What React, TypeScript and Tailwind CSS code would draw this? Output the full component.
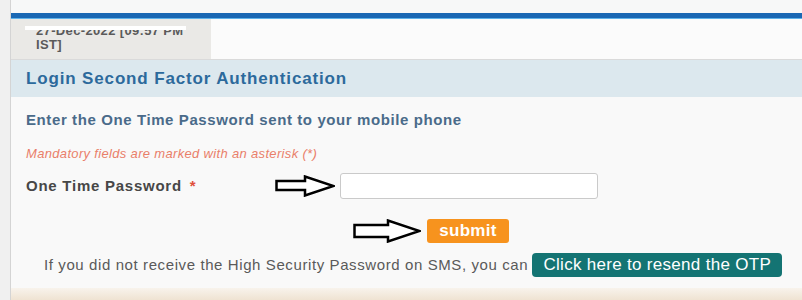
import React from "react";

function OutlineArrow({ w, h, shaftTop, shaftBottom, headX }: { w: number; h: number; shaftTop: number; shaftBottom: number; headX: number }) {
  const pts = `1.5,${shaftTop} ${headX},${shaftTop} ${headX},1.5 ${w - 1.5},${h / 2} ${headX},${h - 1.5} ${headX},${shaftBottom} 1.5,${shaftBottom}`;
  return (
    <svg width={w} height={h} viewBox={`0 0 ${w} ${h}`} className="block shrink-0">
      <polygon points={pts} fill="#ffffff" stroke="#000000" strokeWidth="2.5" strokeLinejoin="miter" />
    </svg>
  );
}

export default function App() {
  return (
    <div className="w-[802px] h-[300px] overflow-hidden flex bg-[#f2f2f2] font-['Liberation_Sans',Arial,sans-serif]">
      <div className="w-[10px] shrink-0 bg-[#f0f0f0]" />
      <div className="flex-1 flex flex-col border-l border-[#d4d4d4] bg-[#fafafa]">
        <div className="h-[13px] bg-[#f7f8f8]" />
        <div className="h-[5px] bg-[#1a68b4]" />
        <div className="h-[1px] bg-[#5fb3ea]" />
        <div className="h-[40px] flex bg-[#fbfbfb]">
          <div className="w-[200px] bg-[#eae9e6] relative pl-[25px] pt-[5px] text-[13px] leading-[14px] font-bold text-[#5a5a5a] tracking-[0.35px]">
            <div>27-Dec-2022 [09:57 PM</div>
            <div>IST]</div>
            <div className="absolute left-[14px] top-[7px] w-[161px] h-[4px] bg-white" />
          </div>
          <div className="flex-1" />
        </div>
        <div className="h-[38px] border-t border-[#dadada] bg-[#dce8ee] flex items-center pl-[15px]">
          <span className="text-[17px] font-bold text-[#2c6a9c] tracking-[0.85px]">Login Second Factor Authentication</span>
        </div>
        <div className="flex-1 flex flex-col bg-[#f9f9f9] pl-[15px]">
          <div className="mt-[13px] h-[20px] leading-[20px] text-[15px] font-bold text-[#4a6b8a] tracking-[0.6px]">
            Enter the One Time Password sent to your mobile phone
          </div>
          <div className="mt-[16px] h-[16px] leading-[16px] text-[13px] italic text-[#e97f6a] tracking-[0.33px]">
            Mandatory fields are marked with an asterisk (*)
          </div>
          <div className="mt-[11px] h-[26px] flex items-center">
            <div className="w-[249px] text-[15px] font-bold text-[#474747] tracking-[0.75px]">
              One Time Password <span className="text-[#e0503c] ml-[3px]">*</span>
            </div>
            <OutlineArrow w={60} h={22} shaftTop={6} shaftBottom={15} headX={30} />
            <div className="ml-[5px] w-[258px] h-[26px] rounded-[3px] border border-[#cacaca] bg-white" />
          </div>
          <div className="mt-[20px] h-[24px] flex items-center pl-[327px]">
            <OutlineArrow w={68} h={24} shaftTop={6} shaftBottom={18} headX={35} />
            <div className="ml-[6px] w-[82px] h-[24px] rounded-[3px] bg-[#f7931e] flex items-center justify-center text-[17px] font-bold text-white tracking-[0.3px]">
              submit
            </div>
          </div>
          <div className="mt-[10px] h-[24px] flex items-center pl-[18px]">
            <span className="text-[15px] text-[#5a5a5a] tracking-[0.6px]">
              If you did not receive the High Security Password on SMS, you can
            </span>
            <div className="ml-[4px] w-[250px] h-[24px] rounded-[4px] bg-[#147473] flex items-center justify-center text-[17px] text-white tracking-[0.3px]">
              Click here to resend the OTP
            </div>
          </div>
          <div className="flex-1" />
        </div>
        <div className="h-[12px] bg-gradient-to-b from-[#f8f3ec] to-[#efe3d2]" />
      </div>
    </div>
  );
}
